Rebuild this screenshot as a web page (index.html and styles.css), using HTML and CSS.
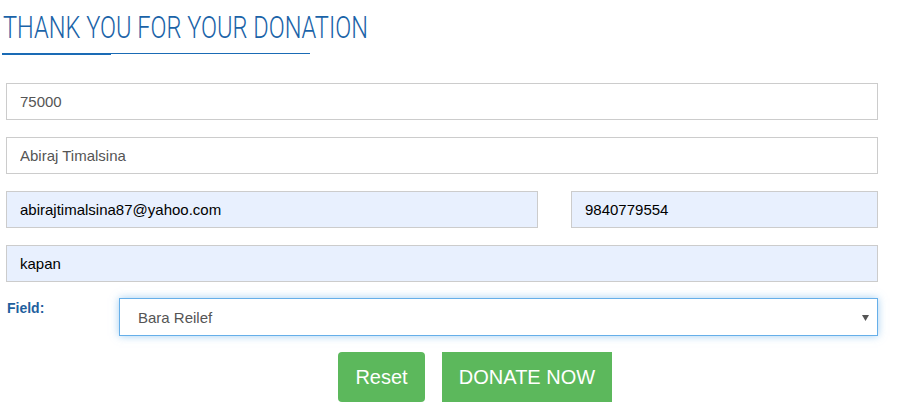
FILE: index.html
```html
<!DOCTYPE html>
<html>
<head>
<meta charset="utf-8">
<link rel="stylesheet" href="styles.css">
</head>
<body>
<div class="page">
  <div class="heading">
    <h2 class="title">THANK YOU FOR YOUR DONATION</h2>
  </div>
  <form class="form">
    <input class="field" type="text" value="75000">
    <input class="field" type="text" value="Abiraj Timalsina">
    <div class="row-two">
      <input class="field filled" type="text" value="abirajtimalsina87@yahoo.com">
      <input class="field filled" type="text" value="9840779554">
    </div>
    <input class="field filled" type="text" value="kapan">
    <div class="select-row">
      <label class="label">Field:</label>
      <div class="select">
        <span class="select-text">Bara Reilef</span>
        <svg class="caret" width="7" height="6" viewBox="0 0 7 6"><path d="M0 0H7L3.5 6Z" fill="#555"/></svg>
      </div>
    </div>
    <div class="actions">
      <button type="button" class="btn btn-reset">Reset</button>
      <button type="button" class="btn btn-donate">DONATE NOW</button>
    </div>
  </form>
</div>
</body>
</html>
```
FILE: styles.css
```css
* { box-sizing: border-box; }
html, body { margin: 0; padding: 0; background: #fff; }
body { font-family: "Liberation Sans", Arial, sans-serif; }
.page { padding: 0 20px 0 6px; width: 898px; }
.heading {
  width: 308px;
  margin-left: -4px;
  border-bottom: 1px solid #1a6bb5;
  position: relative;
  height: 54px;
  padding-top: 10px;
}
.heading::after {
  content: "";
  position: absolute;
  left: 0;
  bottom: -2px;
  width: 109px;
  height: 2px;
  background: #1a6bb5;
}
.title {
  margin: 0 0 0 1px;
  font-family: "Roboto", "Liberation Sans", sans-serif;
  font-weight: 300;
  font-size: 31px;
  line-height: 36px;
  color: #1a63a8;
  white-space: nowrap;
  display: inline-block;
  transform: scaleX(0.761);
  transform-origin: left center;
}
.form {
  margin-top: 29px;
  width: 872px;
  display: flex;
  flex-direction: column;
  gap: 17px;
}
.field {
  display: block;
  width: 100%;
  height: 37px;
  border: 1px solid #ccc;
  padding: 0 13px;
  font-family: "Liberation Sans", Arial, sans-serif;
  font-size: 15px;
  color: #555;
  background: #fff;
  outline: none;
}
.field.filled { background: #e8f0fe; color: #000; }
.row-two {
  display: grid;
  grid-template-columns: 532px 1fr;
  gap: 33px;
}
.select-row {
  display: flex;
  align-items: flex-start;
  margin-top: -1px;
}
.label {
  width: 113px;
  padding-left: 1px;
  padding-top: 2px;
  font-size: 14px;
  font-weight: bold;
  color: #1f5f9e;
}
.select {
  flex: 1;
  height: 38px;
  border: 1px solid #66afe9;
  box-shadow: 0 0 8px rgba(102, 175, 233, 0.6);
  display: flex;
  align-items: center;
  justify-content: space-between;
  padding: 0 8px 0 18px;
  font-size: 15px;
  color: #555;
}
.caret { display: block; margin-top: 1px; }
.actions {
  display: flex;
  justify-content: center;
  gap: 17px;
  padding-left: 66px;
  margin-top: -1px;
}
.btn {
  height: 50px;
  border: none;
  background: #5cb85c;
  color: #fff;
  font-family: "Liberation Sans", Arial, sans-serif;
  font-size: 20px;
  padding: 0;
}
.btn-reset { width: 87px; border-radius: 4px; }
.btn-donate { width: 170px; border-radius: 0; }
```
